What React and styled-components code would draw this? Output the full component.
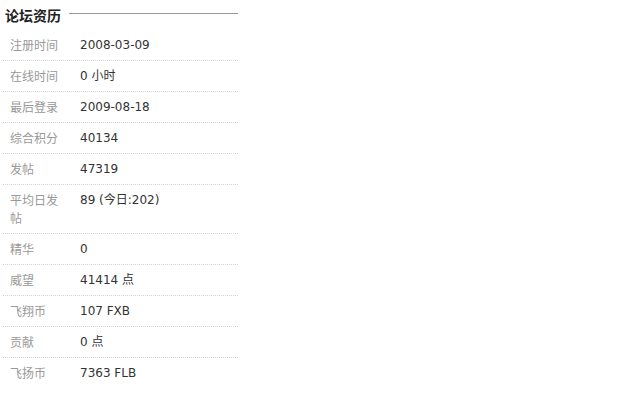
import React from 'react';
import styled, { createGlobalStyle } from 'styled-components';

const rows = [
  ['注册时间', '2008-03-09'],
  ['在线时间', '0 小时'],
  ['最后登录', '2009-08-18'],
  ['综合积分', '40134'],
  ['发帖', '47319'],
  ['平均日发帖', '89 (今日:202)'],
  ['精华', '0'],
  ['威望', '41414 点'],
  ['飞翔币', '107 FXB'],
  ['贡献', '0 点'],
  ['飞扬币', '7363 FLB'],
];

const App = () => {
  return (
    <>
      <GlobalStyle />
      <Panel>
        <Heading>
          <Title>论坛资历</Title>
          <Rule />
        </Heading>
        <List>
          {rows.map(([label, value], i) => (
            <Row key={label} last={i === rows.length - 1}>
              <Label>{label}</Label>
              <Value>{value}</Value>
            </Row>
          ))}
        </List>
      </Panel>
    </>
  );
};

export default App;

const GlobalStyle = createGlobalStyle`
  body {
    margin: 0;
    background: #fff;
    font-family: "DejaVu Sans", "Noto Sans CJK SC", sans-serif;
    font-size: 12px;
  }
`;

const Panel = styled.div`
  width: 235px;
  padding: 6px 0 0 3px;
`;

const Heading = styled.div`
  display: flex;
  align-items: center;
  height: 18px;
  padding-left: 2px;
  margin-bottom: 6px;
`;

const Title = styled.h3`
  margin: 0;
  font-family: "Noto Sans CJK SC", sans-serif;
  font-size: 14px;
  font-weight: 700;
  line-height: 18px;
  color: #222;
`;

const Rule = styled.div`
  flex: 1;
  margin-left: 8px;
  margin-top: -3px;
  border-top: 1px solid #999;
`;

const List = styled.div`
  display: flex;
  flex-direction: column;
`;

const Row = styled.div`
  display: flex;
  padding: 6px 0;
  line-height: 18px;
  border-bottom: ${p => (p.last ? 'none' : '1px dotted #d4d4d4')};
`;

const Label = styled.div`
  width: 56px;
  padding: 0 14px 0 7px;
  flex-shrink: 0;
  color: #999;
  font-family: "Noto Sans CJK SC", sans-serif;
`;

const Value = styled.div`
  color: #333;
`;
